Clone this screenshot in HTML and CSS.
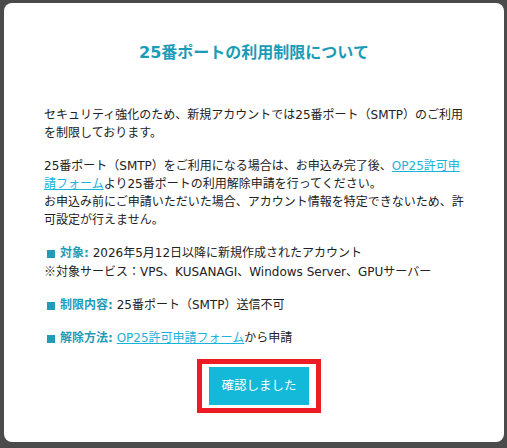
FILE: index.html
```html
<!DOCTYPE html>
<html lang="ja">
<head>
<meta charset="utf-8">
<title>25番ポートの利用制限について</title>
<link rel="stylesheet" href="styles.css">
</head>
<body>
<div class="overlay">
  <div class="modal" role="dialog" aria-labelledby="modal-title">
    <h2 class="modal-title" id="modal-title">25番ポートの利用制限について</h2>
    <div class="modal-body">
      <p class="text">セキュリティ強化のため、新規アカウントでは25番ポート（SMTP）のご利用を制限しております。</p>
      <p class="text">25番ポート（SMTP）をご利用になる場合は、お申込み完了後、<a class="link" href="#">OP25許可申請フォーム</a>より25番ポートの利用解除申請を行ってください。<br>お申込み前にご申請いただいた場合、アカウント情報を特定できないため、許可設定が行えません。</p>
      <ul class="facts">
        <li class="fact"><span class="mark"></span><strong class="label">対象:</strong> 2026年5月12日以降に新規作成されたアカウント<br><span class="kome">※</span>対象サービス：VPS、KUSANAGI、Windows Server、GPUサーバー</li>
        <li class="fact"><span class="mark"></span><strong class="label">制限内容:</strong> 25番ポート（SMTP）送信不可</li>
        <li class="fact"><span class="mark"></span><strong class="label">解除方法:</strong> <a class="link" href="#">OP25許可申請フォーム</a>から申請</li>
      </ul>
    </div>
    <div class="actions">
      <span class="highlight"><button class="confirm" type="button">確認しました</button></span>
    </div>
  </div>
</div>
</body>
</html>
```

FILE: styles.css
```css
html, body {
  margin: 0;
  padding: 0;
}

body {
  background: #4b4b4b;
  font-family: "DejaVu Sans", "Noto Sans CJK JP", sans-serif;
  color: #222222;
}

.overlay {
  width: 507px;
  height: 448px;
  overflow: hidden;
}

.modal {
  box-sizing: border-box;
  width: 500px;
  margin: 3px 0 0 4px;
  padding: 37.5px 38px 29px;
  background: #ffffff;
  border-radius: 8px;
}

.modal-title {
  margin: 0 0 41px;
  font-size: 16px;
  line-height: 24px;
  font-weight: bold;
  text-align: center;
  color: #1a9bb6;
}

.modal-body {
  padding-left: 2px;
  font-size: 12px;
  line-height: 18px;
}

.text {
  margin: 0 0 15px;
}

.link {
  color: #1ab2d9;
  text-decoration: underline;
}

.facts {
  list-style: none;
  margin: 0;
  padding: 0;
}

.fact {
  margin: 0 0 15px;
}

.fact:last-child {
  margin-bottom: 0;
}

.mark {
  display: inline-block;
  width: 8px;
  height: 8px;
  margin: 0 5px 0 3px;
  background: #1f9cb7;
  vertical-align: -1px;
}

.label {
  color: #1f9cb7;
  font-weight: bold;
}

.kome {
  font-family: "Noto Sans CJK JP", sans-serif;
}

.actions {
  display: flex;
  justify-content: center;
  padding-left: 10px;
  margin-top: 12.5px;
}

.highlight {
  display: block;
  border: 5px solid #ed1c24;
  padding: 3px 7px;
}

.confirm {
  display: block;
  width: 100px;
  padding: 10px 0;
  border: none;
  border-radius: 0;
  background: #14b8d8;
  color: #ffffff;
  font-family: "DejaVu Sans", "Noto Sans CJK JP", sans-serif;
  font-size: 12.5px;
  line-height: 18px;
  cursor: pointer;
}
```
